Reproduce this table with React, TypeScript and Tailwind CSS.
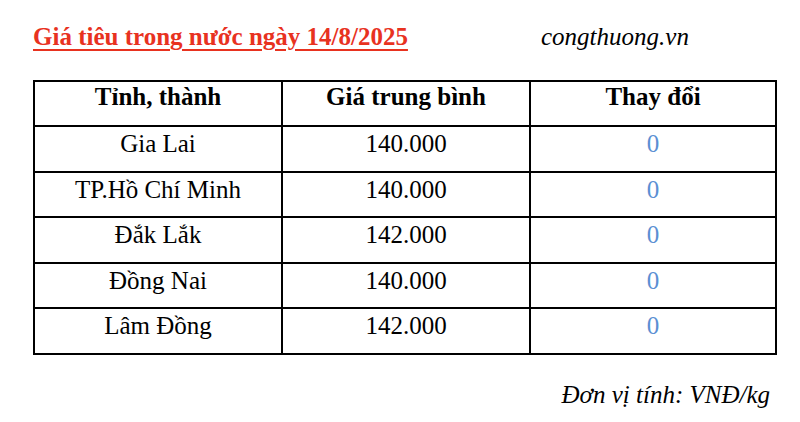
export default function App() {
  const rows = [
    ["Gia Lai", "140.000", "0"],
    ["TP.Hồ Chí Minh", "140.000", "0"],
    ["Đắk Lắk", "142.000", "0"],
    ["Đồng Nai", "140.000", "0"],
    ["Lâm Đồng", "142.000", "0"],
  ];
  return (
    <div className="w-[800px] h-[422px] bg-white text-black font-['Liberation_Serif',serif] text-[25px] leading-[25px]">
      <div className="flex pt-[24px] pl-[33px]">
        <span className="text-[#e8321f] font-bold underline decoration-2 underline-offset-[4px] w-[508px]">
          Giá tiêu trong nước ngày 14/8/2025
        </span>
        <span className="italic">congthuong.vn</span>
      </div>
      <div className="pl-[33px] pt-[31px]">
        <table className="w-[744px] border-collapse border-2 border-black">
          <thead>
            <tr className="h-[45px]">
              <th className="border-2 border-black font-bold w-[248px] align-top pt-[2px]">Tỉnh, thành</th>
              <th className="border-2 border-black font-bold w-[248px] align-top pt-[2px]">Giá trung bình</th>
              <th className="border-2 border-black font-bold align-top pt-[2px]">Thay đổi</th>
            </tr>
          </thead>
          <tbody>
            {rows.map((r) => (
              <tr key={r[0]} className="h-[45.5px]">
                <td className="border-2 border-black text-center align-top pt-[4px]">{r[0]}</td>
                <td className="border-2 border-black text-center align-top pt-[4px]">{r[1]}</td>
                <td className="border-2 border-black text-center align-top pt-[4px] text-[#5b8fd3]">{r[2]}</td>
              </tr>
            ))}
          </tbody>
        </table>
      </div>
      <div className="flex justify-end pr-[30px] pt-[27px]">
        <span className="italic">Đơn vị tính: VNĐ/kg</span>
      </div>
    </div>
  );
}
